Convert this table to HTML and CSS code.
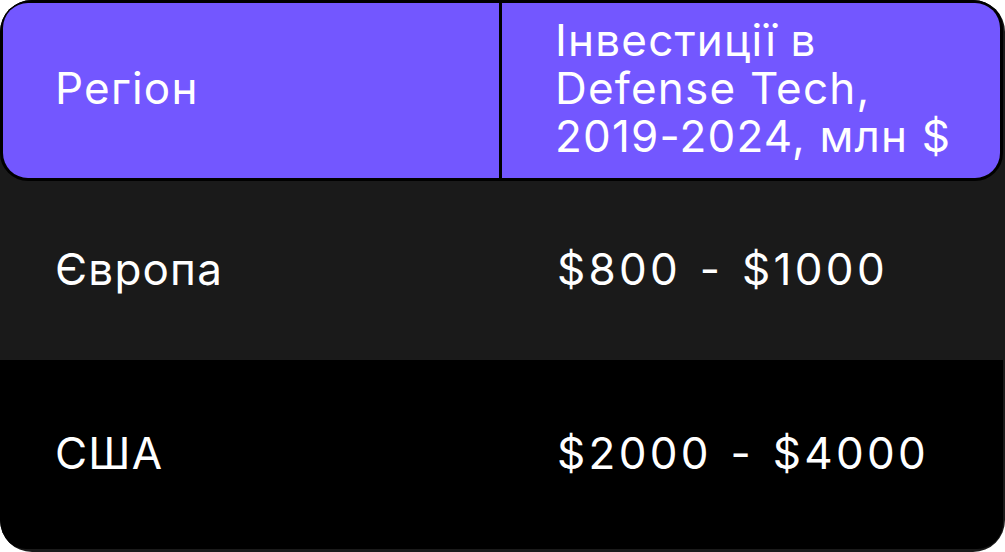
FILE: index.html
```html
<!DOCTYPE html>
<html lang="uk">
<head>
<meta charset="utf-8">
<link rel="stylesheet" href="styles.css">
</head>
<body>
<div class="table">
  <div class="head">
    <div class="hcell">Регіон</div>
    <div class="hcell">Інвестиції в<br>Defense Tech,<br>2019-2024, млн $</div>
  </div>
  <div class="row row-gray">
    <div class="cell">Європа</div>
    <div class="cell value">$800 - $1000</div>
  </div>
  <div class="row row-black">
    <div class="cell">США</div>
    <div class="cell value">$2000 - $4000</div>
  </div>
</div>
</body>
</html>
```
FILE: styles.css
```css
html, body {
  margin: 0;
  padding: 0;
  background: #ffffff;
}
.table {
  width: 1005px;
  height: 552px;
  box-sizing: border-box;
  padding: 0 2px 3px 0;
  background: #1a1a1a;
  border-radius: 32px;
  overflow: hidden;
  display: flex;
  flex-direction: column;
  font-family: Inter, "Noto Sans", sans-serif;
  color: #ffffff;
  font-size: 44px;
  line-height: 48px;
  letter-spacing: 1.2px;
}
.head {
  height: 181px;
  flex: none;
  box-sizing: border-box;
  border: 3px solid #000;
  border-radius: 28px;
  background: #000;
  overflow: hidden;
  display: grid;
  grid-template-columns: 496px 1fr;
  column-gap: 3px;
}
.hcell {
  background: #7357ff;
  display: flex;
  align-items: center;
  padding-left: 52px;
  padding-bottom: 5px;
}
.hcell + .hcell {
  padding-left: 53px;
}
.row {
  display: grid;
  grid-template-columns: 502px 1fr;
  align-items: center;
}
.row-gray {
  height: 179px;
  flex: none;
  background: #1a1a1a;
}
.row-black {
  flex: 1;
  background: #000;
  border-radius: 0 0 26px 26px;
}
.cell {
  padding-left: 55px;
  padding-bottom: 3px;
}
.value {
  letter-spacing: 3.3px;
  word-spacing: 3px;
}
```
